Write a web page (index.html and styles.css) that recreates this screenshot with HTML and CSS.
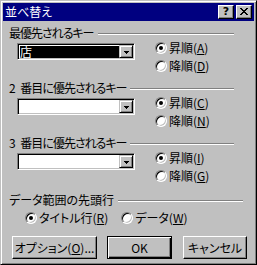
FILE: index.html
```html
<!DOCTYPE html>
<html lang="ja">
<head>
<meta charset="utf-8">
<title>並べ替え</title>
<link rel="stylesheet" href="styles.css">
</head>
<body>
<div class="window">
  <div class="titlebar">
    <span class="title">並べ替え</span>
    <div class="caption-buttons">
      <div class="cap-btn help">?</div>
      <div class="cap-btn close">
        <svg width="8" height="7" viewBox="0 0 8 7" shape-rendering="crispEdges">
          <path d="M0 0h2v1h-2zM6 0h2v1h-2zM1 1h2v1h-2zM5 1h2v1h-2zM2 2h4v1h-4zM3 3h2v1h-2zM2 4h4v1h-4zM1 5h2v1h-2zM5 5h2v1h-2zM0 6h2v1h-2zM6 6h2v1h-2z" fill="#000"/>
        </svg>
      </div>
    </div>
  </div>
  <div class="content">
    <section class="group">
      <div class="legend"><span class="legend-text tight">最優先されるキー</span><span class="etch"></span></div>
      <div class="group-body">
        <div class="combo">
          <div class="field"><span class="sel">店</span></div>
          <div class="drop"><svg width="5" height="3" viewBox="0 0 5 3" shape-rendering="crispEdges"><path d="M0 0h5v1h-5zM1 1h3v1h-3zM2 2h1v1h-1z" fill="#000"/></svg></div>
        </div>
        <div class="radios">
          <div class="opt"><span class="radio checked"></span><span>昇順(<u>A</u>)</span></div>
          <div class="opt"><span class="radio"></span><span>降順(<u>D</u>)</span></div>
        </div>
      </div>
    </section>
    <section class="group">
      <div class="legend"><span class="legend-text tight">2 番目に優先されるキー</span><span class="etch"></span></div>
      <div class="group-body">
        <div class="combo">
          <div class="field"></div>
          <div class="drop"><svg width="5" height="3" viewBox="0 0 5 3" shape-rendering="crispEdges"><path d="M0 0h5v1h-5zM1 1h3v1h-3zM2 2h1v1h-1z" fill="#000"/></svg></div>
        </div>
        <div class="radios">
          <div class="opt"><span class="radio checked"></span><span>昇順(<u>C</u>)</span></div>
          <div class="opt"><span class="radio"></span><span>降順(<u>N</u>)</span></div>
        </div>
      </div>
    </section>
    <section class="group g3">
      <div class="legend"><span class="legend-text tight">3 番目に優先されるキー</span><span class="etch"></span></div>
      <div class="group-body">
        <div class="combo">
          <div class="field"></div>
          <div class="drop"><svg width="5" height="3" viewBox="0 0 5 3" shape-rendering="crispEdges"><path d="M0 0h5v1h-5zM1 1h3v1h-3zM2 2h1v1h-1z" fill="#000"/></svg></div>
        </div>
        <div class="radios">
          <div class="opt"><span class="radio checked"></span><span>昇順(<u>I</u>)</span></div>
          <div class="opt"><span class="radio"></span><span>降順(<u>G</u>)</span></div>
        </div>
      </div>
    </section>
    <section class="group g4">
      <div class="legend"><span class="legend-text">データ範囲の先頭行</span><span class="etch"></span></div>
      <div class="row-radios">
        <div class="opt"><span class="radio checked"></span><span>タイトル行(<u>R</u>)</span></div>
        <div class="opt"><span class="radio"></span><span>データ(<u>W</u>)</span></div>
      </div>
    </section>
    <div class="buttons">
      <div class="btn btn-options">オプション(<u>O</u>)...</div>
      <div class="btn btn-ok default">OK</div>
      <div class="btn btn-cancel">キャンセル</div>
    </div>
  </div>
</div>
</body>
</html>
```

FILE: styles.css
```css
* { box-sizing: border-box; }
html, body { margin: 0; padding: 0; background: #c0c0c0; }
body {
  font-family: "Noto Sans CJK JP", "Noto Sans", sans-serif;
  font-size: 12px;
  line-height: 12px;
  color: #000;
  font-feature-settings: "palt";
}
.window {
  width: 257px;
  height: 265px;
  background: #c0c0c0;
  border: 1px solid;
  border-color: #c0c0c0 #000 #000 #c0c0c0;
  box-shadow: inset 1px 1px #fff, inset -1px -1px #808080;
  padding: 2px;
  display: flex;
  flex-direction: column;
}
.titlebar {
  height: 18px;
  background: #000080;
  color: #fff;
  display: flex;
  align-items: center;
  justify-content: space-between;
  padding: 0 2px 0 2px;
}
.title { padding-left: 0; }
.caption-buttons { display: flex; gap: 2px; }
.cap-btn {
  width: 16px;
  height: 14px;
  background: #c0c0c0;
  border: 1px solid;
  border-color: #fff #000 #000 #fff;
  box-shadow: inset -1px -1px #808080;
  color: #000;
  display: flex;
  align-items: center;
  justify-content: center;
}
.cap-btn.help {
  font-family: "DejaVu Sans", "Liberation Sans", sans-serif;
  font-weight: bold;
  font-size: 11px;
  line-height: 11px;
  padding-bottom: 1px;
}
.cap-btn.close { padding-bottom: 1px; }
.cap-btn svg { display: block; }

.content {
  flex: 1;
  padding: 6px 0 0 6px;
  display: flex;
  flex-direction: column;
}
.group { margin-bottom: 10px; }
.group.g3 { margin-bottom: 12px; }
.group.g4 { margin-bottom: 0; }
.legend {
  height: 12px;
  display: flex;
  align-items: flex-start;
}
.legend-text { white-space: nowrap; }
.legend-text.tight { letter-spacing: -1px; word-spacing: 4px; }
.etch {
  flex: 1;
  height: 2px;
  margin-top: 6px;
  margin-left: 4px;
  margin-right: 20px;
  border-top: 1px solid #808080;
  border-bottom: 1px solid #fff;
}
.g4 .etch { margin-right: 11px; }

.group-body {
  display: flex;
  align-items: flex-start;
  margin-top: 3px;
  padding-left: 8px;
}
.combo {
  width: 118px;
  height: 17px;
  margin-top: 1px;
  display: flex;
  border: 1px solid;
  border-color: #808080 #fff #fff #808080;
  box-shadow: inset 1px 1px #000, inset -1px -1px #c0c0c0;
  padding: 1px;
  background: #fff;
}
.field {
  flex: 1;
  background: #fff;
  padding: 1px 0 0 1px;
  display: flex;
}
.sel {
  flex: 1;
  background: #000;
  color: #fff;
  line-height: 12px;
  height: 12px;
}
.drop {
  width: 14px;
  height: 13px;
  background: #c0c0c0;
  border: 1px solid;
  border-color: #c0c0c0 #000 #000 #c0c0c0;
  box-shadow: inset 1px 1px #fff, inset -1px -1px #808080;
  display: flex;
  align-items: center;
  justify-content: center;
  padding-top: 1px;
}
.drop svg { display: block; }

.radios {
  display: flex;
  flex-direction: column;
  gap: 6px;
  margin-left: 20px;
}
.opt {
  display: flex;
  align-items: center;
  gap: 2px;
  height: 12px;
  white-space: nowrap;
}
.radio {
  width: 12px;
  height: 12px;
  border-radius: 50%;
  border: 1px solid;
  border-color: #808080 #fff #fff #808080;
  box-shadow: inset 1px 1px #000, inset -1px -1px #c0c0c0;
  background: #fff;
  position: relative;
  flex: none;
}
.radio.checked::after {
  content: "";
  position: absolute;
  left: 3px;
  top: 3px;
  width: 4px;
  height: 4px;
  border-radius: 50%;
  background: #000;
}
u { text-decoration: underline; text-underline-offset: 1px; }

.row-radios {
  display: flex;
  gap: 13px;
  margin-top: 6px;
  padding-left: 16px;
}

.buttons {
  display: flex;
  margin-top: 12px;
  margin-left: 3px;
}
.btn {
  height: 23px;
  display: flex;
  align-items: center;
  justify-content: center;
  background: #c0c0c0;
  border: 1px solid;
  border-color: #fff #000 #000 #fff;
  box-shadow: inset -1px -1px #808080;
  white-space: nowrap;
}
.btn.default {
  border-color: #000;
  box-shadow: inset 1px 1px #fff, inset -1px -1px #000, inset -2px -2px #808080;
}
.btn-options { width: 85px; }
.btn-ok { width: 65px; margin-left: 10px; }
.btn-cancel { width: 64px; margin-left: 11px; }
```
